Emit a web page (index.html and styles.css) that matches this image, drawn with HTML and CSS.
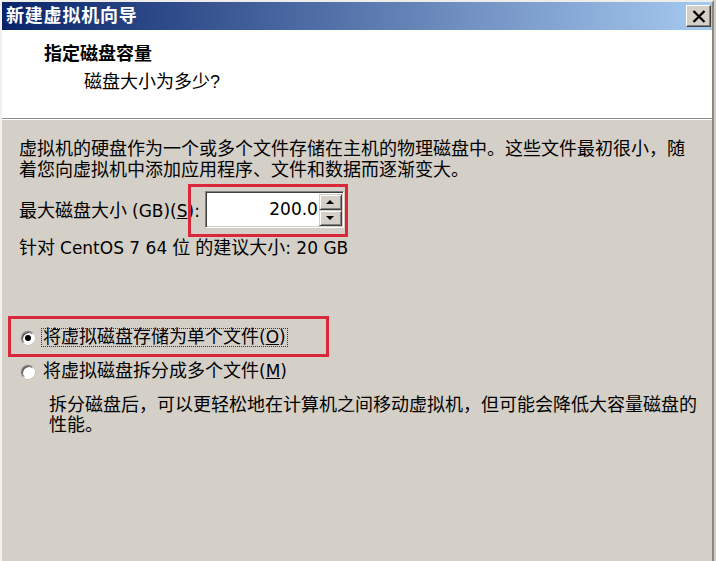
FILE: index.html
```html
<!DOCTYPE html>
<html lang="zh-CN">
<head>
<meta charset="utf-8">
<title>新建虚拟机向导</title>
<link rel="stylesheet" href="styles.css">
</head>
<body>
<div class="window">
  <div class="titlebar">
    <span class="title">新建虚拟机向导</span>
    <span class="close" aria-label="关闭">
      <svg width="14" height="13" viewBox="0 0 14 13"><path d="M1.5 1 L12.5 12 M12.5 1 L1.5 12" stroke="#000" stroke-width="2.3" fill="none"/></svg>
    </span>
  </div>
  <div class="header">
    <div class="h-title">指定磁盘容量</div>
    <div class="h-sub">磁盘大小为多少?</div>
  </div>
  <div class="content">
    <p class="intro">虚拟机的硬盘作为一个或多个文件存储在主机的物理磁盘中。这些文件最初很小，随<br>着您向虚拟机中添加应用程序、文件和数据而逐渐变大。</p>
    <div class="size-row">
      <span class="label">最大磁盘大小 <span class="lat">(GB)(<u>S</u>):</span></span>
      <div class="spin-field">
        <span class="spin-value lat">200.0</span>
        <div class="spin-buttons">
          <span class="spin-btn"><span class="tri-up"></span></span>
          <span class="spin-btn"><span class="tri-down"></span></span>
        </div>
      </div>
    </div>
    <p class="recommend">针对 <span class="lat">CentOS 7 64</span> 位 的建议大小<span class="lat">: 20 GB</span></p>
    <div class="options">
      <div class="radio-row">
        <span class="radio checked"></span>
        <span class="radio-label focused">将虚拟磁盘存储为单个文件<span class="lat">(<u>O</u>)</span></span>
      </div>
      <div class="radio-row second">
        <span class="radio"></span>
        <span class="radio-label">将虚拟磁盘拆分成多个文件<span class="lat">(<u>M</u>)</span></span>
      </div>
      <p class="desc">拆分磁盘后，可以更轻松地在计算机之间移动虚拟机，但可能会降低大容量磁盘的<br>性能。</p>
    </div>
  </div>
  <div class="annot annot-size"></div>
  <div class="annot annot-single"></div>
</div>
</body>
</html>
```
FILE: styles.css
```css
html, body {
  margin: 0;
  padding: 0;
  background: #D4D0C8;
}
body {
  font-family: "Liberation Sans", "Noto Sans CJK SC", sans-serif;
  font-size: 18px;
  color: #000;
}
.lat {
  font-family: "DejaVu Sans", "Liberation Sans", sans-serif;
  font-size: 17px;
}
.window {
  position: relative;
  width: 714px;
  height: 561px;
  box-sizing: border-box;
  border-top: 2px solid #eeede9;
  border-left: 2px solid #f2f1ee;
  border-right: 2px solid #8a8883;
  background: #D4D0C8;
  display: flex;
  flex-direction: column;
}
.titlebar {
  height: 28px;
  flex: none;
  display: flex;
  align-items: center;
  justify-content: space-between;
  padding-left: 4px;
  padding-right: 1px;
  background: linear-gradient(to right, #0A246A 0%, #A6CAF0 100%);
}
.title {
  color: #fff;
  font-weight: bold;
  font-size: 18px;
  line-height: 22px;
  letter-spacing: 0.8px;
}
.close {
  width: 25px;
  height: 22px;
  box-sizing: border-box;
  background: #D4D0C8;
  border: 1px solid;
  border-color: #fff #404040 #404040 #fff;
  box-shadow: inset -1px -1px 0 #808080;
  display: flex;
  align-items: center;
  justify-content: center;
}
.close svg {
  display: block;
}
.header {
  height: 89px;
  flex: none;
  background: #fff;
  border-bottom: 1px solid #8c8a86;
  padding: 12px 0 0 42px;
  box-sizing: border-box;
}
.h-title {
  font-weight: bold;
  line-height: 24px;
  font-size: 18px;
}
.h-sub {
  margin-top: 4px;
  margin-left: 40px;
  line-height: 24px;
}
.content {
  flex: 1;
  border-top: 1px solid #fff;
  padding: 19px 0 0 17px;
}
.intro {
  margin: 0;
  line-height: 21px;
}
.size-row {
  margin-top: 10px;
  display: flex;
  align-items: center;
  height: 37px;
}
.label {
  line-height: 21px;
  padding-top: 3px;
}
.spin-field {
  margin-left: 5px;
  width: 139px;
  height: 37px;
  box-sizing: border-box;
  display: flex;
  border: 1px solid;
  border-color: #808080 #fff #fff #808080;
  box-shadow: inset 1px 1px 0 #404040, inset -1px -1px 0 #D4D0C8;
  background: #fff;
  padding: 2px 1px 1px 2px;
}
.spin-value {
  flex: 1;
  text-align: right;
  padding-right: 1px;
  line-height: 30px;
}
.spin-buttons {
  width: 23px;
  display: flex;
  flex-direction: column;
}
.spin-btn {
  flex: 1;
  background: #D4D0C8;
  box-sizing: border-box;
  border: 1px solid;
  border-color: #D4D0C8 #404040 #404040 #D4D0C8;
  box-shadow: inset 1px 1px 0 #fff, inset -1px -1px 0 #808080;
  display: flex;
  align-items: center;
  justify-content: center;
}
.tri-up, .tri-down {
  width: 0;
  height: 0;
  border-left: 4px solid transparent;
  border-right: 4px solid transparent;
}
.tri-up {
  border-bottom: 4px solid #000;
}
.tri-down {
  border-top: 4px solid #000;
}
.recommend {
  margin: 10px 0 0;
  line-height: 21px;
}
.options {
  margin-top: 68px;
}
.radio-row {
  display: flex;
  align-items: center;
  height: 21px;
}
.radio-row.second {
  margin-top: 13px;
}
.radio {
  position: relative;
  flex: none;
  width: 14px;
  height: 14px;
  box-sizing: border-box;
  margin-left: 2px;
  border-radius: 50%;
  border: 1px solid;
  border-color: #808080 #fff #fff #808080;
  box-shadow: inset 1px 1px 0 #404040, 0 0 0 0.5px #bcb8b0;
  background: #fff;
}
.radio.checked::after {
  content: "";
  position: absolute;
  left: 3px;
  top: 3px;
  width: 6px;
  height: 6px;
  border-radius: 50%;
  background: #000;
}
.radio-label {
  margin-left: 6px;
  line-height: 17px;
  padding: 0 1px;
  border: 1px dotted transparent;
}
.radio-label.focused {
  border-color: #333;
}
.desc {
  margin: 13px 0 0 30px;
  line-height: 20px;
}
.annot {
  position: absolute;
  box-sizing: border-box;
  border: 3px solid #d8283a;
}
.annot-size {
  left: 186px;
  top: 182px;
  width: 160px;
  height: 53px;
}
.annot-single {
  left: 6px;
  top: 314px;
  width: 321px;
  height: 41px;
}
```
